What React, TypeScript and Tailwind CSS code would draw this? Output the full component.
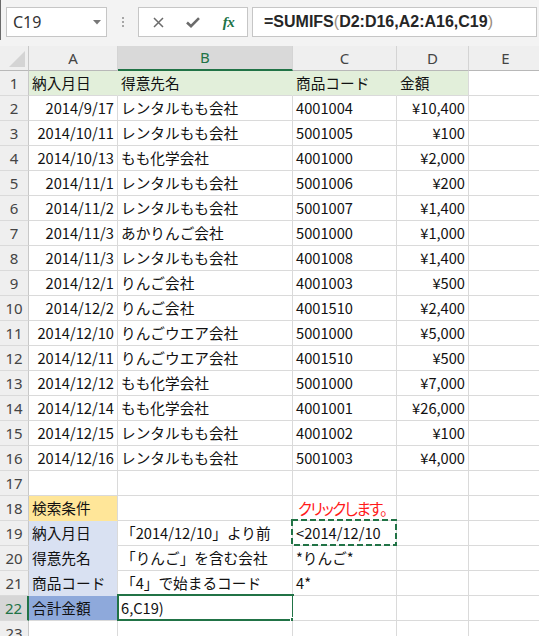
import React from "react";

const W = ["w-[89px]", "w-[175px]", "w-[104px]", "w-[72px]", "w-[74px]"];

type CellSpec = {
  t?: string;
  r?: boolean;
  bg?: string;
  br?: string;
  bb?: string;
  extra?: string;
  overlay?: React.ReactNode;
};

function Cell({ spec, i }: { spec: CellSpec; i: number }) {
  return (
    <div
      className={`relative h-full shrink-0 border-r border-b flex items-center whitespace-nowrap overflow-visible ${W[i]} ${
        spec.bg ?? "bg-white"
      } ${spec.br ?? "border-r-[#dadada]"} ${spec.bb ?? "border-b-[#dadada]"} ${
        spec.r ? "justify-end pr-[3px]" : "justify-start pl-[3px]"
      }`}
    >
      {spec.t !== undefined && (
        <span className={`leading-none pt-[1px] ${spec.extra ?? ""}`}>{spec.t}</span>
      )}
      {spec.overlay}
    </div>
  );
}

function RowHeader({ n, active }: { n: number; active?: boolean }) {
  return (
    <div
      className={`w-[29px] h-full shrink-0 border-b border-b-[#dadada] flex items-center justify-center font-['Noto_Sans',sans-serif] text-[15px] leading-none ${
        active
          ? "bg-[#d6d6d6] text-[#217346] border-r-2 border-r-[#217346]"
          : "bg-[#efefef] text-[#444] border-r border-r-[#c8c8c8]"
      }`}
    >
      {n}
    </div>
  );
}

const data: [string, string, string, string][] = [
  ["2014/9/17", "レンタルもも会社", "4001004", "¥10,400"],
  ["2014/10/11", "レンタルもも会社", "5001005", "¥100"],
  ["2014/10/13", "もも化学会社", "4001000", "¥2,000"],
  ["2014/11/1", "レンタルもも会社", "5001006", "¥200"],
  ["2014/11/2", "レンタルもも会社", "5001007", "¥1,400"],
  ["2014/11/3", "あかりんご会社", "5001000", "¥1,000"],
  ["2014/11/3", "レンタルもも会社", "4001008", "¥1,400"],
  ["2014/12/1", "りんご会社", "4001003", "¥500"],
  ["2014/12/2", "りんご会社", "4001510", "¥2,400"],
  ["2014/12/10", "りんごウエア会社", "5001000", "¥5,000"],
  ["2014/12/11", "りんごウエア会社", "4001510", "¥500"],
  ["2014/12/12", "もも化学会社", "5001000", "¥7,000"],
  ["2014/12/14", "もも化学会社", "4001001", "¥26,000"],
  ["2014/12/15", "レンタルもも会社", "4001002", "¥100"],
  ["2014/12/16", "レンタルもも会社", "5001003", "¥4,000"],
];

const Dashed = (
  <svg
    className="absolute left-[-2px] top-[-2px] w-[106px] h-[27px] pointer-events-none"
    viewBox="0 0 106 27"
  >
    <rect
      x="1"
      y="1"
      width="104"
      height="25"
      fill="none"
      stroke="#217346"
      strokeWidth="2"
      strokeDasharray="6 3"
    />
  </svg>
);

const Active = (
  <div className="absolute left-[-1px] top-[-2px] w-[177px] h-[27px] border-2 border-[#217346] pointer-events-none">
    <div className="absolute right-[-4px] bottom-[-4px] w-[6px] h-[6px] bg-[#217346] border border-white" />
  </div>
);

export default function App() {
  const rows: { n: number; cells: CellSpec[]; active?: boolean }[] = [];
  const green = "bg-[#e2efda]";
  rows.push({
    n: 1,
    cells: [
      { t: "納入月日", bg: green, br: "border-r-[#e2efda]" },
      { t: "得意先名", bg: green, br: "border-r-[#e2efda]" },
      { t: "商品コード", bg: green, br: "border-r-[#e2efda]" },
      { t: "金額", bg: green },
      {},
    ],
  });
  data.forEach((d, i) => {
    rows.push({
      n: i + 2,
      cells: [{ t: d[0], r: true }, { t: d[1] }, { t: d[2] }, { t: d[3], r: true }, {}],
    });
  });
  rows.push({ n: 17, cells: [{}, {}, {}, {}, {}] });
  rows.push({
    n: 18,
    cells: [
      { t: "検索条件", bg: "bg-[#ffe699]", bb: "border-b-[#ffe699]" },
      {},
      {
        t: "クリックします。",
        extra: "text-[#ff1a1a] text-[15.5px] [font-feature-settings:'palt'] pl-[2px] tracking-[-1.5px]",
      },
      {},
      {},
    ],
  });
  rows.push({
    n: 19,
    cells: [
      { t: "納入月日", bg: "bg-[#d9e1f2]", bb: "border-b-[#d9e1f2]" },
      { t: "「2014/12/10」より前" },
      { t: "<2014/12/10", overlay: Dashed },
      {},
      {},
    ],
  });
  rows.push({
    n: 20,
    cells: [
      { t: "得意先名", bg: "bg-[#d9e1f2]", bb: "border-b-[#d9e1f2]" },
      { t: "「りんご」を含む会社" },
      { t: "*りんご*" },
      {},
      {},
    ],
  });
  rows.push({
    n: 21,
    cells: [
      { t: "商品コード", bg: "bg-[#d9e1f2]", bb: "border-b-[#d9e1f2]" },
      { t: "「4」で始まるコード" },
      { t: "4*" },
      {},
      {},
    ],
  });
  rows.push({
    n: 22,
    active: true,
    cells: [
      { t: "合計金額", bg: "bg-[#8ea9db]" },
      { t: "6,C19)", overlay: Active },
      {},
      {},
      {},
    ],
  });
  rows.push({ n: 23, cells: [{}, {}, {}, {}, {}] });

  const headers = ["A", "B", "C", "D", "E"];

  return (
    <div className="w-[539px] h-[636px] overflow-hidden bg-white relative">
      {/* Formula bar */}
      <div className="h-[46px] bg-[#f3f3f3] relative">
        <div className="absolute left-0 top-0 w-px h-[40px] bg-[#6a6a6a]" />
        <div className="flex items-start pt-[7px] pl-[6px]">
          <div className="w-[101px] h-[30px] bg-white border border-[#c6c6c6] flex items-center justify-between pl-[6px] pr-[5px]">
            <span className="font-['Noto_Sans',sans-serif] text-[16px] text-[#333] leading-none">
              C19
            </span>
            <svg width="8" height="5" viewBox="0 0 8 5">
              <path d="M0 0 L8 0 L4 4.5 Z" fill="#777" />
            </svg>
          </div>
          <div className="w-[31px] h-[30px] flex flex-col items-center justify-center gap-[2px]">
            <div className="w-[2px] h-[2px] bg-[#a6a6a6]" />
            <div className="w-[2px] h-[2px] bg-[#a6a6a6]" />
            <div className="w-[2px] h-[2px] bg-[#a6a6a6]" />
          </div>
          <div className="w-[110px] h-[30px] bg-white border border-[#c6c6c6] flex items-center">
            <div className="w-[37px] flex justify-center pl-[1px]">
              <svg width="11" height="11" viewBox="0 0 11 11">
                <path d="M1 1 L10 10 M10 1 L1 10" stroke="#6b6b6b" strokeWidth="1.5" fill="none" />
              </svg>
            </div>
            <div className="w-[34px] flex justify-center">
              <svg width="14" height="11" viewBox="0 0 14 11">
                <path d="M1 5.5 L5 9.2 L13 1.2" stroke="#6b6b6b" strokeWidth="2.6" fill="none" />
              </svg>
            </div>
            <div className="w-[37px] flex justify-center">
              <span className="font-['Liberation_Serif',serif] italic text-[15px] text-[#217346] leading-none font-bold tracking-[-0.5px]">
                fx
              </span>
            </div>
          </div>
          <div className="ml-[4px] w-[285px] h-[30px] bg-white border border-[#c6c6c6] flex items-center pl-[11px]">
            <span className="font-['Liberation_Sans',sans-serif] font-bold text-[16px] text-[#262626] leading-none whitespace-nowrap">
              =SUMIFS<span className="text-[#9a8c7c] font-normal">(</span>D2:D16,A2:A16,C19
              <span className="text-[#9a8c7c] font-normal">)</span>
            </span>
          </div>
        </div>
      </div>

      {/* Column headers */}
      <div className="flex h-[25px] bg-[#efefef]">
        <div className="w-[29px] h-full shrink-0 border-r border-b border-r-[#c8c8c8] border-b-[#b8b8b8] relative">
          <svg className="absolute right-[3px] bottom-[3px]" width="16" height="16" viewBox="0 0 16 16">
            <path d="M16 0 L16 16 L0 16 Z" fill="#d4d4d4" />
          </svg>
        </div>
        {headers.map((h, i) => (
          <div
            key={h}
            className={`${W[i]} h-full shrink-0 border-r border-r-[#d4d4d4] flex items-center justify-center font-['Noto_Sans',sans-serif] text-[15px] leading-none ${
              i === 1
                ? "bg-[#d9d9d9] text-[#217346] border-b-2 border-b-[#217346]"
                : "text-[#444] border-b border-b-[#b8b8b8]"
            }`}
          >
            {h}
          </div>
        ))}
      </div>

      {/* Rows */}
      <div className="flex flex-col font-['Noto_Sans_CJK_JP',sans-serif] text-[14.67px] text-[#111]">
        {rows.map((row) => (
          <div key={row.n} className="flex h-[25px] shrink-0">
            <RowHeader n={row.n} active={row.active} />
            {row.cells.map((c, i) => (
              <Cell key={i} spec={c} i={i} />
            ))}
          </div>
        ))}
      </div>
    </div>
  );
}
